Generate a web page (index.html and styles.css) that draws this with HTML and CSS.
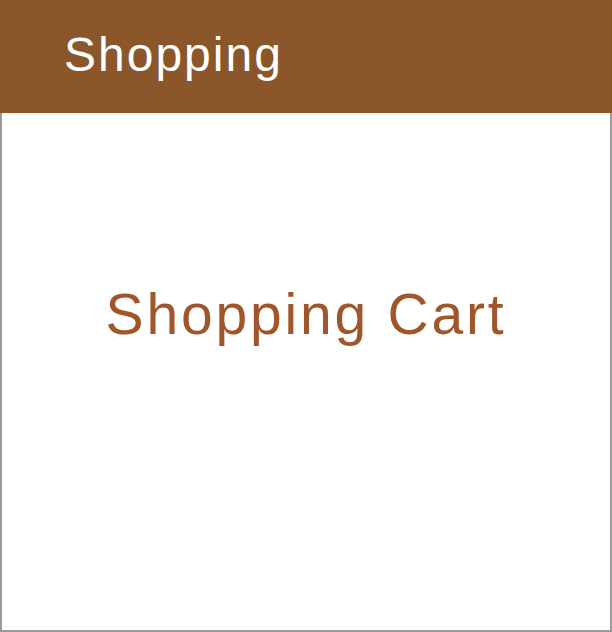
FILE: index.html
```html
<!DOCTYPE html>
<html>
<head>
<meta charset="utf-8">
<link rel="stylesheet" href="styles.css">
</head>
<body>
<div class="app">
  <header class="topbar"><span class="topbar-title">Shopping</span></header>
  <main class="content"><h1 class="content-title">Shopping Cart</h1></main>
</div>
</body>
</html>
```
FILE: styles.css
```css
html, body { margin: 0; padding: 0; background: #fff; }
.app {
  width: 612px;
  height: 632px;
  display: flex;
  flex-direction: column;
  font-family: "Liberation Sans", Arial, sans-serif;
}
.topbar {
  height: 113px;
  flex: 0 0 113px;
  background: #8b572a;
  display: flex;
  align-items: center;
  padding-left: 64px;
  box-sizing: border-box;
}
.topbar-title {
  color: #fff;
  font-size: 48px;
  line-height: 1;
  letter-spacing: 2px;
  padding-bottom: 4px;
}
.content {
  flex: 1;
  border: 2px solid #9a9a9a;
  border-top: none;
  display: flex;
  justify-content: center;
  align-items: flex-start;
  padding-top: 173px;
}
.content-title {
  margin: 0;
  font-weight: normal;
  color: #a0562a;
  font-size: 57px;
  line-height: 1;
  letter-spacing: 2.8px;
}
```
